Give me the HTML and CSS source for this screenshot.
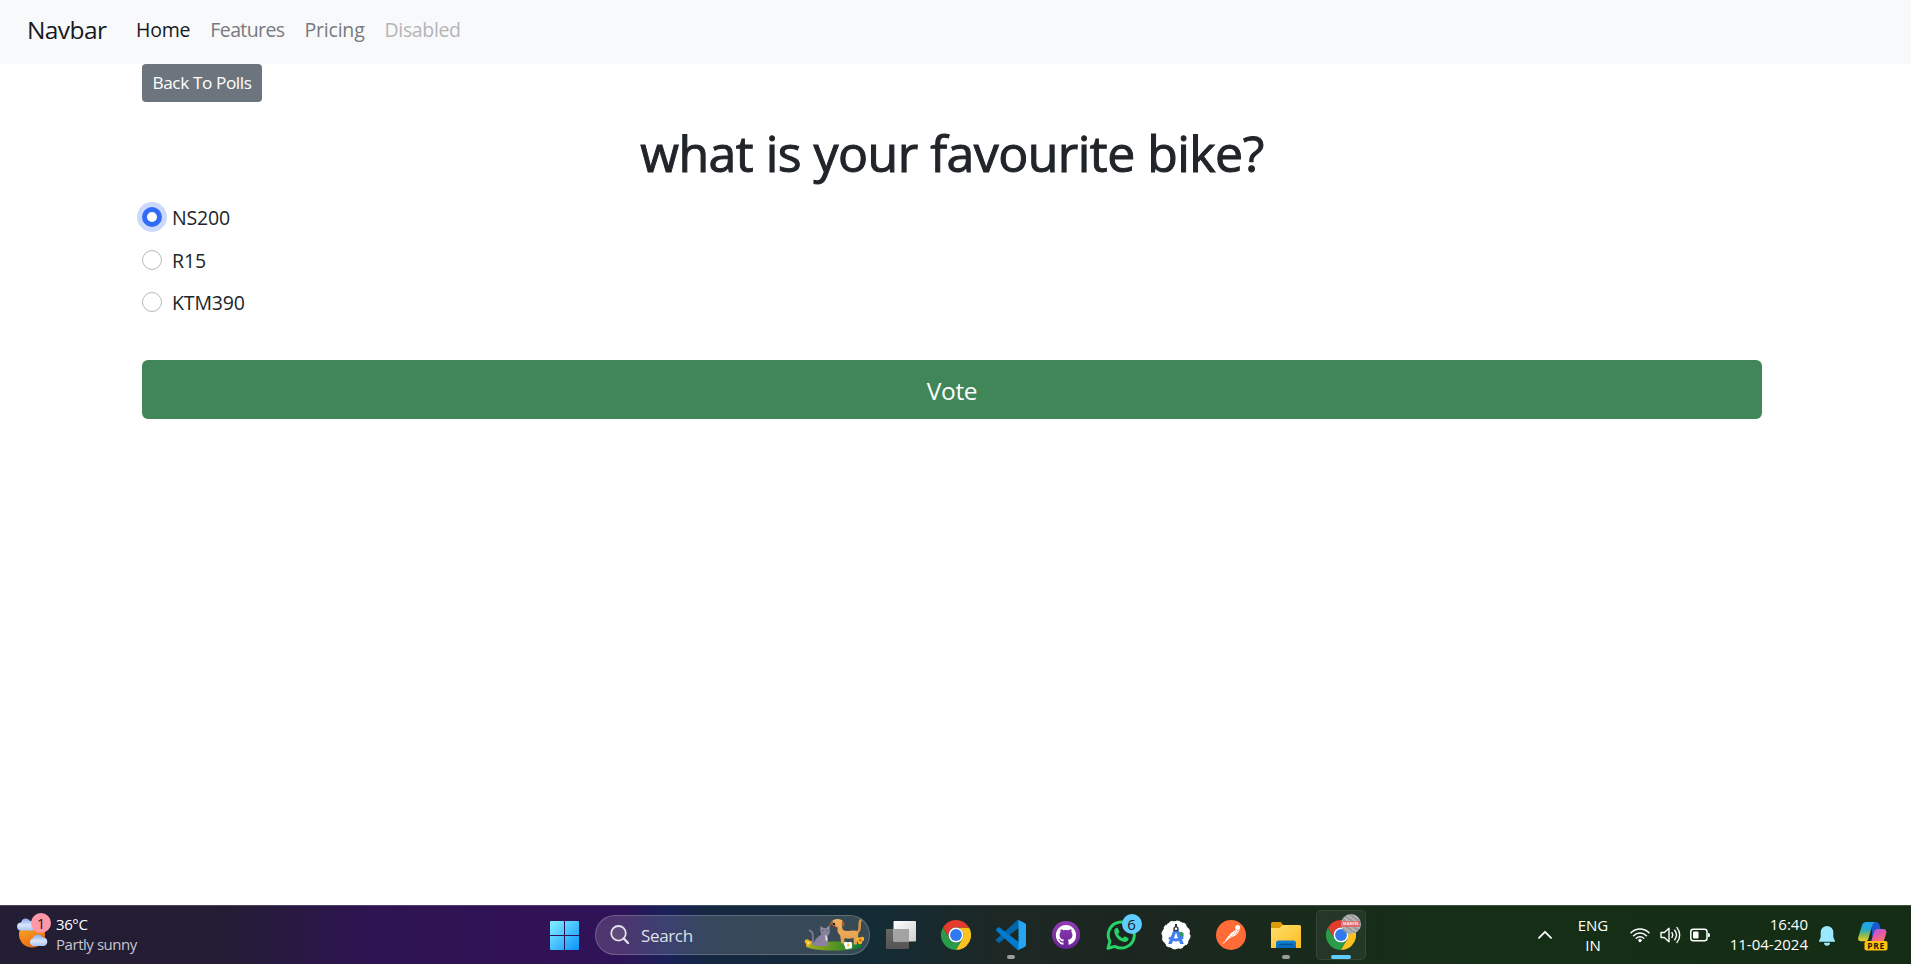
FILE: index.html
```
<!DOCTYPE html>
<html lang="en">
<head>
<meta charset="utf-8">
<title>Polls</title>
<link rel="stylesheet" href="styles.css">
</head>
<body>
<div class="page">
  <nav class="navbar">
    <a class="brand">Navbar</a>
    <a class="nav-link active">Home</a>
    <a class="nav-link features">Features</a>
    <a class="nav-link">Pricing</a>
    <a class="nav-link disabled">Disabled</a>
  </nav>
  <main class="container">
    <button class="btn-back">Back To Polls</button>
    <h1 class="question">what is your favourite bike?</h1>
    <div class="options">
      <label class="option"><i class="radio checked"></i>NS200</label>
      <label class="option"><i class="radio"></i>R15</label>
      <label class="option"><i class="radio"></i>KTM390</label>
    </div>
    <button class="btn-vote">Vote</button>
  </main>
</div>
<footer class="taskbar">
  <div class="weather">
    <div class="weather-icon">
      <svg width="36" height="36" viewBox="0 0 36 36">
        <defs>
          <linearGradient id="sun" x1="0" y1="0" x2="0.4" y2="1"><stop offset="0" stop-color="#f9b92c"/><stop offset="1" stop-color="#ee6a12"/></linearGradient>
          <linearGradient id="cloud" x1="0" y1="0" x2="0" y2="1"><stop offset="0" stop-color="#86a8ea"/><stop offset=".55" stop-color="#dbe6fb"/><stop offset="1" stop-color="#a9c2f3"/></linearGradient>
        </defs>
        <circle cx="16" cy="21.500" r="13" fill="url(#sun)"/>
        <path d="M5 17.500a4 4 0 0 1 .2-8 4.700 4.700 0 0 1 8.800-1.500 4 4 0 0 1 2.500 9.500z" fill="url(#cloud)"/>
        <path d="M17 33a3.900 3.900 0 0 1 0-7.600 5 5 0 0 1 9.300-1.200 4.500 4.500 0 0 1 1.700 8.800z" fill="url(#cloud)"/>
      </svg>
      <span class="badge badge-pink">1</span>
    </div>
    <div class="two-line">
      <span class="temp">36°C</span>
      <span class="sky">Partly sunny</span>
    </div>
  </div>

  <div class="apps">
    <svg class="start" width="29" height="29" viewBox="0 0 29 29">
      <defs><linearGradient id="win" x1="0" y1="0" x2="29" y2="29" gradientUnits="userSpaceOnUse"><stop offset="0" stop-color="#84f1ff"/><stop offset="1" stop-color="#0a93fb"/></linearGradient></defs>
      <path fill="url(#win)" d="M1 0h13v14H0V1a1 1 0 0 1 1-1zM15 0h13a1 1 0 0 1 1 1v13H15zM0 15h14v14H1a1 1 0 0 1-1-1zM15 15h14v13a1 1 0 0 1-1 1H15z"/>
    </svg>
    <div class="search">
      <svg width="20" height="20" viewBox="0 0 20 20" fill="none" stroke="#e6e2ec" stroke-width="1.800" stroke-linecap="round"><circle cx="8.500" cy="8.300" r="7.300" fill="#6d5a80" fill-opacity=".6"/><path d="M13.800 13.500L18 18" stroke-width="2.300"/></svg>
      <span class="search-label">Search</span>
      <svg class="pets" width="60" height="34" viewBox="0 0 60 34">
        <defs>
          <linearGradient id="grass" x1="0" y1="0" x2="1" y2="0"><stop offset="0" stop-color="#a9ad1e"/><stop offset=".5" stop-color="#59961f"/><stop offset="1" stop-color="#087a3b"/></linearGradient>
          <linearGradient id="dog" x1="0" y1="0" x2="0" y2="1"><stop offset="0" stop-color="#f0b15c"/><stop offset="1" stop-color="#e59f50"/></linearGradient>
        </defs>
        <ellipse cx="30" cy="28" rx="28" ry="4.500" fill="url(#grass)"/>
        <path d="M12 27C5 27 13 14 5.500 12.500" fill="none" stroke="#7d768f" stroke-width="1.800" stroke-linecap="round"/>
        <path d="M10 28c-1-5 3-9 7.500-11.500-1-1.500-1.500-4-1-8.500l3.300 2h2.400l3.500-3v7c0 2-1 3-2.300 4l1 10z" fill="#8a829f"/>
        <path d="M21 17l2 1 .8 4-2 1.500z" fill="#d8d4e2"/><path d="M17.200 9.500l1.500 1.300-1.200.8zM25 8.500l-1.600 1.800 1.200.8z" fill="#c28fae"/>
        <circle cx="18.800" cy="12.500" r=".8" fill="#2d7b4b"/><circle cx="23" cy="12.500" r=".8" fill="#2d7b4b"/>
        <path d="M53 14.500c5-2.500 1-8 3.500-12" fill="none" stroke="#d99042" stroke-width="2.600" stroke-linecap="round"/>
        <path d="M28.500 2.500c3-2 7-2 10 0l1.500 3-2 1.500c0 3 .5 4.500 2 5.500 3.500 1 7 0 10 0 4 0 5 3 4 6l-1.300 8h-3l-.2-7c-3 1.500-6 1.500-9 .5l-.3 5.500h-3l-1-8c-2.500-2-3.200-5-2.500-8l-5-1.500z" fill="url(#dog)"/>
        <path d="M28 2.500l-2 2.500.5 3 2-2zM38 2.500l2.500 2.500-.5 4-2.200-2z" fill="#a75c27"/><path d="M28.500 7.500h3.500l-1.700 3z" fill="#9b2f32"/><circle cx="30" cy="6" r="1.200" fill="#2c1710"/>
        <g fill="#f6b41f"><circle cx="3" cy="23.500" r="2.300"/><circle cx="6" cy="24.500" r="2"/><circle cx="4" cy="26.500" r="2"/></g><circle cx="4.200" cy="24.800" r="1.100" fill="#fff07a"/>
        <g fill="#f7b526"><circle cx="54.500" cy="21.500" r="2.200"/><circle cx="58" cy="21" r="2.200"/><circle cx="56" cy="24" r="2.200"/></g><circle cx="56.200" cy="22.200" r="1.200" fill="#c55c10"/>
        <g fill="#fff"><circle cx="42" cy="26" r="2.200"/><circle cx="46" cy="26" r="2.200"/><circle cx="43" cy="29" r="2.200"/><circle cx="46" cy="28.500" r="2.200"/></g><circle cx="44.200" cy="27.300" r="1.200" fill="#f7c625"/>
      </svg>
    </div>

    <div class="app">
      <svg width="30" height="30" viewBox="0 0 30 30">
        <defs><linearGradient id="tvw" x1="0" y1="0" x2="1" y2="1"><stop offset="0" stop-color="#fff"/><stop offset="1" stop-color="#cfcfcf"/></linearGradient><linearGradient id="tvd" x1="0" y1="0" x2="0" y2="1"><stop offset="0" stop-color="#686868"/><stop offset="1" stop-color="#545454"/></linearGradient></defs>
        <rect x="0" y="9" width="23" height="20" rx="1" fill="url(#tvd)"/>
        <rect x="7.500" y="1" width="22.500" height="20.500" rx="1" fill="url(#tvw)"/>
        <path d="M7.500 9H23v12.500H8.500a1 1 0 0 1-1-1z" fill="#a3a3a3"/>
      </svg>
    </div>
    <div class="app">
      <svg width="30" height="30" viewBox="0 0 48 48">
        <symbol id="chrome" viewBox="0 0 48 48">
          <path d="M3.215 12A24 24 0 0 0 24 48L34.390 30A12 12 0 0 1 13.600 30z" fill="#2a9b49"/>
          <path d="M24 48A24 24 0 0 0 44.785 12H24A12 12 0 0 1 34.390 30z" fill="#fcc31e"/>
          <path d="M44.785 12A24 24 0 0 0 3.215 12L13.600 30A12 12 0 0 1 24 12z" fill="#e33b2e"/>
          <circle cx="24" cy="24" r="12" fill="#fff"/><circle cx="24" cy="24" r="9.500" fill="#3079ee"/>
        </symbol>
        <use href="#chrome"/>
      </svg>
    </div>
    <div class="app">
      <svg width="30" height="30" viewBox="0 0 100 100">
        <path d="M96.500 10.800L75.900.9a6.200 6.200 0 0 0-7.100 1.200L1.300 63.600a4.200 4.200 0 0 0 0 6.200l5.500 5a4.200 4.200 0 0 0 5.300.2L93.400 13.400c2.700-2 6.600-.1 6.600 3.300v-.2a6.300 6.300 0 0 0-3.500-5.700z" fill="#0065a9"/>
        <path d="M96.500 89.200l-20.600 9.900a6.200 6.200 0 0 1-7.100-1.200L1.300 36.400a4.200 4.200 0 0 1 0-6.200l5.500-5a4.200 4.200 0 0 1 5.300-.2l81.300 61.600c2.700 2 6.600.1 6.600-3.300v.2a6.300 6.300 0 0 1-3.500 5.700z" fill="#007acc"/>
        <path d="M75.900 99.100a6.200 6.200 0 0 1-7.100-1.200c2.300 2.300 6.200.7 6.200-2.600V4.700c0-3.300-3.900-4.900-6.200-2.600A6.200 6.200 0 0 1 75.900.9l20.600 9.900a6.300 6.300 0 0 1 3.500 5.700v67a6.300 6.300 0 0 1-3.500 5.700z" fill="#25a5f2"/>
      </svg>
      <i class="running"></i>
    </div>
    <div class="app">
      <svg width="28" height="28" viewBox="0 0 28 28">
        <defs><linearGradient id="gh" x1="0" y1="0" x2="0" y2="1"><stop offset="0" stop-color="#943db4"/><stop offset="1" stop-color="#652393"/></linearGradient></defs>
        <circle cx="14" cy="14" r="14" fill="url(#gh)"/>
        <path transform="translate(3.900 4.100) scale(1.260)" fill="#fff" d="M8 0C3.580 0 0 3.580 0 8c0 3.540 2.290 6.530 5.470 7.590.4.070.55-.17.55-.38 0-.19-.01-.82-.01-1.490-2.010.37-2.530-.49-2.690-.94-.09-.23-.48-.94-.82-1.130-.28-.15-.68-.52-.01-.53.63-.01 1.080.58 1.230.82.72 1.210 1.870.87 2.330.66.070-.52.28-.87.510-1.070-1.780-.2-3.640-.89-3.640-3.950 0-.87.31-1.590.82-2.150-.08-.2-.36-1.020.08-2.120 0 0 .67-.21 2.200.82.64-.18 1.320-.27 2-.27s1.360.09 2 .27c1.530-1.040 2.200-.82 2.200-.82.44 1.100.16 1.920.08 2.120.51.56.82 1.270.82 2.150 0 3.070-1.870 3.750-3.650 3.950.29.25.54.73.54 1.480 0 1.070-.01 1.930-.01 2.200 0 .21.15.46.55.38A8.010 8.010 0 0 0 16 8c0-4.420-3.580-8-8-8z"/>
      </svg>
    </div>
    <div class="app">
      <svg width="30" height="30" viewBox="0 0 30 30">
        <path d="M2 28.300l1.900-7A13 13 0 1 1 9 26.400z" fill="none" stroke="#25d366" stroke-width="3" stroke-linejoin="round"/>
        <path d="M8.300 10.500c.6-2 2-3 3.400-2.500l1.800 3.900-1.400 2c1 2 2.600 3.300 4.700 4.300l1.900-1.900 3.900 1.900c.2 2-1.500 3.700-4 3.700C13.500 21.700 8 16 8.300 10.500z" fill="#25d366"/>
      </svg>
      <span class="badge badge-blue">6</span>
    </div>
    <div class="app">
      <svg width="30" height="30" viewBox="0 0 30 30">
        <circle cx="15" cy="15" r="13.900" fill="#fff"/><circle cx="15" cy="15" r="13.900" fill="none" stroke="#fff" stroke-width="1.300" stroke-dasharray="3.600 3.670"/>
        <circle cx="19.500" cy="15" r="3.200" fill="#2f9e55"/>
        <path d="M12.800 9h4.400l5.600 15h-3.600L15 12.500 10.800 24H7.200z" fill="#427ff0"/>
        <path d="M8 17.600c4.500 3.200 9.800 3 14-.5" fill="none" stroke="#427ff0" stroke-width="2.800"/>
        <path d="M14 4h2v3h-2z" fill="#29323a"/><circle cx="15" cy="8.800" r="2" fill="#fff" stroke="#29323a" stroke-width="1.300"/>
      </svg>
    </div>
    <div class="app">
      <svg width="30" height="30" viewBox="0 0 30 30">
        <circle cx="15" cy="15" r="15" fill="#ff6c37"/>
        <circle cx="21.700" cy="7.500" r="2.500" fill="#fff"/>
        <path d="M20 9.500l2 1.500-4.800 5.600-4.200 1.900-5.500 4.900 3.500-5.400 3.500-4.400z" fill="#fff"/>
        <path d="M23 10l-1.500 3.500-3.500 2.500M7 23.500l1.500-1.500" fill="none" stroke="#fff" stroke-width=".9"/><path d="M20.500 10.500l-6 7M13 15l2.500 2.200" stroke="#ff8d62" stroke-width=".5"/>
      </svg>
    </div>
    <div class="app">
      <svg width="30" height="30" viewBox="0 0 30 30">
        <defs><linearGradient id="fold" x1="0" y1="0" x2="1" y2="1"><stop offset="0" stop-color="#ffdf6b"/><stop offset="1" stop-color="#fcbc20"/></linearGradient><linearGradient id="fblue" x1="0" y1="0" x2="0" y2="1"><stop offset="0" stop-color="#1382d8"/><stop offset="1" stop-color="#0768b8"/></linearGradient></defs>
        <path d="M0 3.500A1.500 1.500 0 0 1 1.500 2h8.200l2.500 3v5H0z" fill="#dc9c08"/>
        <path d="M0 8h8.500l3.300-3H28.500A1.500 1.500 0 0 1 30 6.500V28H0z" fill="url(#fold)"/>
        <path d="M5 28v-5a2.500 2.500 0 0 1 2.500-2.500h15A2.500 2.500 0 0 1 25 23v5z" fill="url(#fblue)"/><path d="M8.500 24.300h13" stroke="#07508f" stroke-width="1.200" stroke-linecap="round"/>
      </svg>
      <i class="running"></i>
    </div>
    <div class="app">
      <div class="app-focus"></div>
      <svg class="over" width="30" height="30"><use href="#chrome"/></svg>
      <span class="badge profile"><b>MARVEL</b></span>
      <i class="running focused"></i>
    </div>
  </div>

  <div class="tray">
    <svg class="chevron" width="14" height="9" viewBox="0 0 14 9" fill="none" stroke="#fff" stroke-width="1.800" stroke-linecap="round" stroke-linejoin="round"><path d="M1 7.800l6-6 6 6"/></svg>
    <div class="lang"><span>ENG</span><span>IN</span></div>
    <svg class="wifi" width="20" height="16" viewBox="0 0 20 16" fill="none" stroke="#fff" stroke-width="1.500" stroke-linecap="round"><path d="M1 5.800a12.500 12.500 0 0 1 18 0M3.600 8.700a9 9 0 0 1 12.800 0M6.300 11.300a5.300 5.300 0 0 1 7.400 0"/><circle cx="10" cy="13.500" r="1.300" fill="#fff" stroke-width="1"/></svg>
    <svg class="speaker" width="21" height="18" viewBox="0 0 21 18" fill="none" stroke="#fff" stroke-width="1.400" stroke-linecap="round" stroke-linejoin="round"><path d="M1 6.500h3.300L9 2.300v13.400l-4.700-4.200H1zM12 6.700c1 1.500 1 3.100 0 4.600M14.700 4.300c2.300 3 2.300 6.400 0 9.400M17 1.600c3.600 4.300 3.600 10.500 0 14.800"/></svg>
    <svg class="battery" width="20" height="14" viewBox="0 0 20 14"><rect x=".8" y="1.300" width="16.200" height="11.400" rx="2.500" fill="none" stroke="#fff" stroke-width="1.500"/><rect x="3" y="3.500" width="5.500" height="7" rx="1" fill="#fff"/><path d="M18 5h.5a1.500 1.500 0 0 1 1.500 1.500v1A1.500 1.500 0 0 1 18.500 9H18z" fill="#fff"/></svg>
    <div class="clock"><span>16:40</span><span>11-04-2024</span></div>
    <svg class="bell" width="16" height="20" viewBox="0 0 16 20" fill="#9be9ff"><path d="M8 0a6.300 6.300 0 0 1 6.300 6.300v5L16 15v.800H0V15l1.700-3.700v-5A6.300 6.300 0 0 1 8 0zM5 16.800h6a3 3 0 0 1-6 0z"/></svg>
    <svg class="copilot" width="30" height="29" viewBox="0 0 30 29">
      <defs>
        <linearGradient id="cpa" x1="0" y1="0" x2="0" y2="1"><stop offset="0" stop-color="#20a0ed"/><stop offset=".4" stop-color="#27a8c9"/><stop offset=".7" stop-color="#8dbc4c"/><stop offset="1" stop-color="#f4cf25"/></linearGradient>
        <linearGradient id="cpb" x1="0" y1="0" x2=".5" y2="1"><stop offset="0" stop-color="#a35bea"/><stop offset=".5" stop-color="#de59b0"/><stop offset="1" stop-color="#ff7169"/></linearGradient>
      </defs>
      <path d="M14 0h4c2 0 3 1 3.500 3l1.200 4H17l-3 8z" fill="#1958cf"/>
      <path d="M8 0h10c-2 0-3 1-3.600 3L10.300 17c-.6 1.600-1.600 2.300-3.300 2.300H3c-2.500 0-3.500-2-2.700-4.300L4.100 3C4.800 1 6 0 8 0z" fill="url(#cpa)"/>
      <path d="M18.500 7H25c2.800 0 4 1.800 3.300 4L25.500 20H13l3-10.500c.5-1.600 1-2.500 2.500-2.500z" fill="url(#cpb)"/>
      <rect x="6.500" y="19" width="23" height="9.500" rx="2" fill="#ffc20a"/>
      <text x="18" y="26.800" text-anchor="middle" class="pre">PRE</text>
    </svg>
  </div>
</footer>
</body>
</html>
```
FILE: styles.css
```
* { box-sizing: border-box; }
body {
  margin: 0;
  height: 964px;
  display: flex;
  flex-direction: column;
  overflow: hidden;
  background: #fff;
  color: #212529;
  font: 400 19.5px/30px "Open Sans", sans-serif;
}
button { border: 0; font: inherit; color: #fff; display: block; }
.page { height: 905px; }

.navbar {
  height: 64px;
  padding: 0 27px 5px;
  display: flex;
  align-items: center;
  background: #f8f9fb;
}
.brand { font-size: 24.5px; letter-spacing: -.6px; width: 109px; color: #17191c; }
.nav-link { margin-right: 20px; letter-spacing: -.2px; color: #787a7d; }
.nav-link.active { color: #17191c; }
.nav-link.features { letter-spacing: -.6px; }
.nav-link.disabled { letter-spacing: -.35px; color: #b4b5b7; }

.container { padding: 0 149px 0 142px; }
.btn-back {
  width: 120px;
  height: 38px;
  padding: 0;
  border-radius: 4px;
  background: #6c757d;
  font-size: 17.2px;
  letter-spacing: -.4px;
  white-space: nowrap;
}
.question {
  margin: 21px 0 11px;
  text-align: center;
  font-size: 50px;
  font-weight: 500;
  line-height: 60px;
  letter-spacing: -.52px;
  -webkit-text-stroke: 1px #212529;
}
.options { padding-top: 9px; }
.option {
  display: flex;
  align-items: center;
  gap: 10px;
  height: 30px;
  margin-bottom: 12.5px;
  letter-spacing: -.15px;
}
.radio {
  width: 20px;
  height: 20px;
  margin-bottom: 2px;
  border: 1px solid #b8b8b8;
  border-radius: 50%;
  background: #fff;
}
.radio.checked {
  border: 5.500px solid #306cf8;
  box-shadow: 0 0 0 5px #cbdafc;
}
.btn-vote {
  width: 1620px;
  height: 59px;
  margin-top: 41.5px;
  padding: 3px 0 0;
  border-radius: 6px;
  background: #418658;
  font-size: 24.5px;
  letter-spacing: -.3px;
}

.taskbar {
  height: 59px;
  display: flex;
  border-top: 1px solid rgba(255, 255, 255, .18);
  background: linear-gradient(90deg, #231e33 0, #241c35 230px, #2e1452 370px, #311255 530px, #2f1358 620px, #1a2158 668px, #142840 710px, #142c35 880px, #1d2724 1000px, #1c2620 1130px, #172c1a 1350px, #152f16 1500px, #142d14 1911px);
  color: #fff;
  font-size: 15px;
  line-height: 20px;
}
.weather { width: 550px; display: flex; }
.weather-icon { position: relative; width: 56px; padding: 7px 0 0 16px; }
.weather-icon svg { display: block; }
.two-line { display: flex; flex-direction: column; padding-top: 8px; }
.temp { letter-spacing: -.4px; }
.sky { color: #c9c6cf; letter-spacing: -.45px; }
.badge {
  position: absolute;
  width: 20px;
  height: 20px;
  border-radius: 50%;
  text-align: center;
  line-height: 20px;
  color: #1b1b1b;
}
.badge-pink { left: 31px; top: 7px; background: #ff98a6; }
.badge-blue { left: 28.500px; top: -6px; background: #60cdff; }

.apps { width: 950px; display: flex; align-items: flex-start; }
.start { margin-top: 15px; }
.search {
  width: 275px;
  height: 40px;
  margin: 9px 3px 0 16px;
  padding: 0 5px 0 14px;
  display: flex;
  align-items: center;
  border: 1px solid rgba(255, 255, 255, .2);
  border-radius: 20px;
  background: rgba(255, 255, 255, .15);
}
.search-label { margin: 2px 0 0 11px; flex: 1; font-size: 17px; letter-spacing: -.35px; color: #dde0e4; }
.app {
  position: relative;
  width: 55px;
  height: 30px;
  margin-top: 14px;
  display: flex;
  justify-content: center;
  align-items: center;
}
.running {
  position: absolute;
  left: 23.500px;
  top: 35px;
  width: 8px;
  height: 4px;
  border-radius: 2px;
  background: #9b9d9b;
}
.running.focused { left: 17.500px; width: 20px; background: #60cdff; }
.app-focus {
  position: absolute;
  left: 2.500px;
  top: -10px;
  width: 50px;
  height: 50px;
  border: 1px solid rgba(255, 255, 255, .08);
  border-radius: 5px;
  background: rgba(255, 255, 255, .06);
}
.over { position: relative; }
.profile {
  left: 28px;
  top: -6px;
  display: flex;
  align-items: center;
  justify-content: center;
  background: repeating-linear-gradient(35deg, #9b9b9b 0 2px, #b4b4b4 2px 4px);
}
.profile b {
  padding: 0 1px;
  background: #dc6b70;
  color: #ffe9e9;
  font-size: 4px;
  line-height: 6px;
}

.tray { display: flex; align-items: flex-start; }
.chevron { margin: 24px 0 0 38px; }
.lang { width: 32px; margin: 9px 0 0 25px; display: flex; flex-direction: column; align-items: center; }
.wifi { margin: 21px 0 0 21px; }
.speaker { margin: 20px 0 0 10px; }
.battery { margin: 22px 0 0 9px; }
.clock { width: 98px; margin-top: 8px; display: flex; flex-direction: column; align-items: flex-end; }
.bell { margin: 20px 0 0 11px; }
.copilot { margin: 16px 0 0 23px; }
.pre { font: 700 8.500px "Open Sans", sans-serif; letter-spacing: .6px; fill: #201a00; }
```
